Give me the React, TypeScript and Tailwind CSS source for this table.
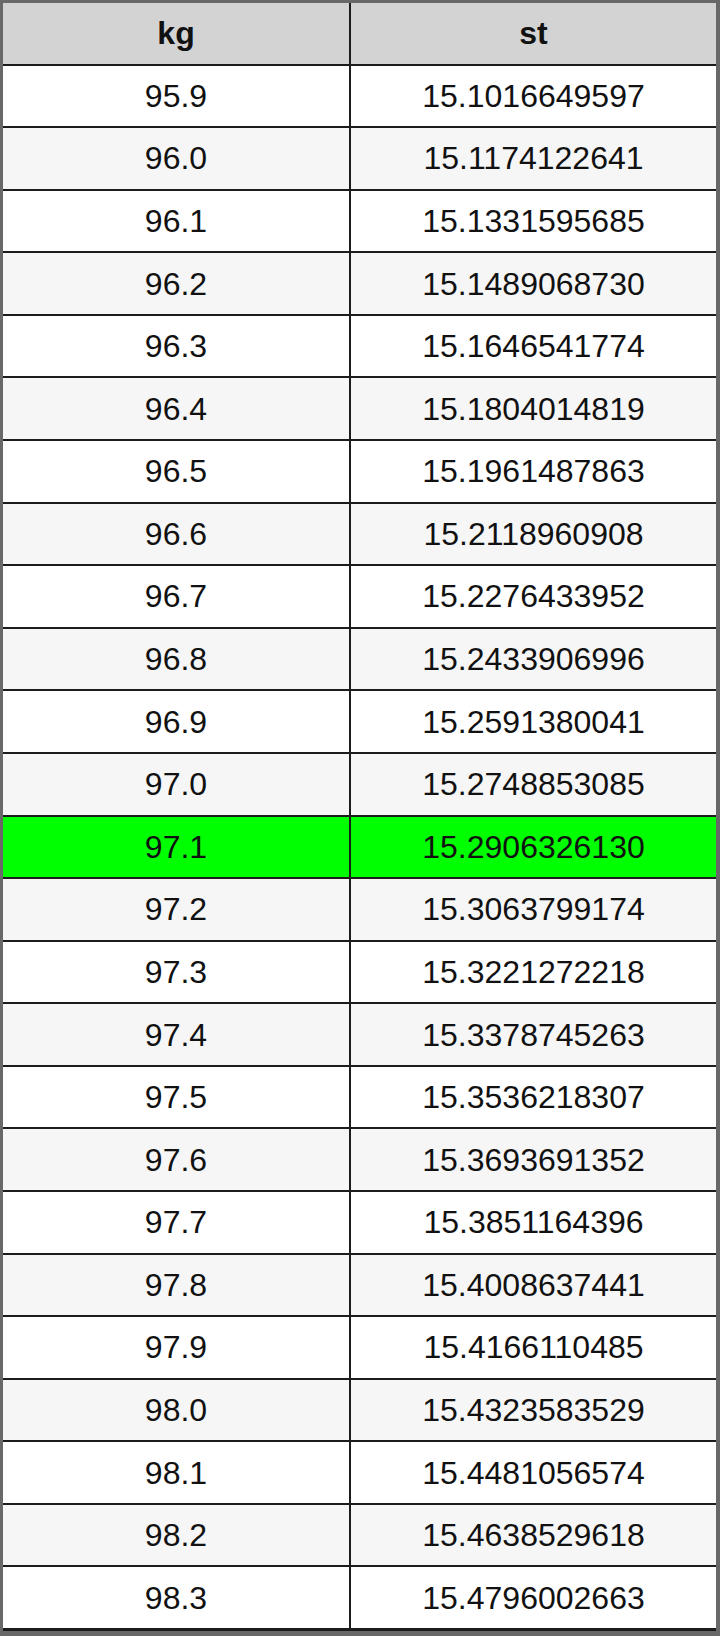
const rows: [string, string][] = [
  ["95.9", "15.1016649597"],
  ["96.0", "15.1174122641"],
  ["96.1", "15.1331595685"],
  ["96.2", "15.1489068730"],
  ["96.3", "15.1646541774"],
  ["96.4", "15.1804014819"],
  ["96.5", "15.1961487863"],
  ["96.6", "15.2118960908"],
  ["96.7", "15.2276433952"],
  ["96.8", "15.2433906996"],
  ["96.9", "15.2591380041"],
  ["97.0", "15.2748853085"],
  ["97.1", "15.2906326130"],
  ["97.2", "15.3063799174"],
  ["97.3", "15.3221272218"],
  ["97.4", "15.3378745263"],
  ["97.5", "15.3536218307"],
  ["97.6", "15.3693691352"],
  ["97.7", "15.3851164396"],
  ["97.8", "15.4008637441"],
  ["97.9", "15.4166110485"],
  ["98.0", "15.4323583529"],
  ["98.1", "15.4481056574"],
  ["98.2", "15.4638529618"],
  ["98.3", "15.4796002663"]
];

const highlighted = "97.1";

function rowColor(index: number, kg: string) {
  if (kg === highlighted) return "bg-[#00ff00]";
  return index % 2 === 0 ? "bg-white" : "bg-[#f6f6f6]";
}

export default function App() {
  return (
    <div className="h-[1636px] w-[720px] bg-[#686868] pb-[5px] pl-[3px] pr-[4px] pt-[3px] font-['Liberation_Sans',Arial,sans-serif] text-[32px] text-[#111]">
      <div className="grid h-full grid-cols-[346px_minmax(0,1fr)] grid-rows-[repeat(26,minmax(0,1fr))] gap-[2px] bg-[#1c1c1c] pb-[3px]">
        <div className="flex items-center justify-center bg-[#d3d3d3] font-bold">kg</div>
        <div className="flex items-center justify-center bg-[#d3d3d3] font-bold">st</div>
        {rows.map(([kg, st], i) => (
          <div key={kg} className="contents">
            <div className={`flex items-center justify-center ${rowColor(i, kg)}`}>{kg}</div>
            <div className={`flex items-center justify-center ${rowColor(i, kg)}`}>{st}</div>
          </div>
        ))}
      </div>
    </div>
  );
}
